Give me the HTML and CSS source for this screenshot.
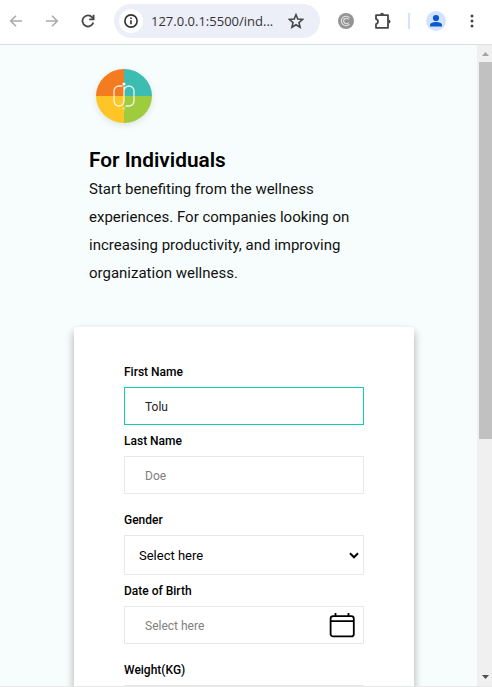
FILE: index.html
```html
<!DOCTYPE html>
<html lang="en">
<head>
<meta charset="utf-8">
<title>For Individuals</title>
<link rel="stylesheet" href="styles.css">
</head>
<body>
<div class="window">
  <header class="toolbar">
    <svg class="nav back" width="14" height="14" viewBox="0 0 14 14"><path d="M13 7H2M7 1.7 1.7 7 7 12.3"/></svg>
    <svg class="nav forward" width="14" height="14" viewBox="0 0 14 14"><path d="M1 7h11M7 1.7 12.3 7 7 12.3"/></svg>
    <svg class="nav reload" width="14" height="14" viewBox="0 0 14 14"><path d="M12.3 8.4A5.5 5.5 0 1 1 11.2 3.4L12.6 5"/><path d="M12.6.8V5.3H8.2"/></svg>
    <div class="address">
      <span class="info"><svg width="14" height="14" viewBox="0 0 14 14"><circle cx="7" cy="7" r="6.1"/><path d="M7 6.2v4M7 3.5v1.6"/></svg></span>
      <span class="url">127.0.0.1:5500/ind...</span>
      <svg class="star" width="16" height="16" viewBox="0 0 16 16"><path d="m8 1.7 1.8 4.4 4.8.4-3.6 3.1 1.1 4.7L8 11.8l-4.1 2.5L5 9.600 1.400 6.500l4.800-.4z"/></svg>
    </div>
    <svg class="copy" width="16" height="16" viewBox="0 0 16 16"><circle class="copy-disc" cx="8" cy="8" r="8"/><path d="M11.500 4.800A4.700 4.700 0 1 0 11.500 11.200M10.600 6.500A2.700 2.700 0 1 0 10.600 9.500"/></svg>
    <svg class="puzzle" width="18" height="18" viewBox="0 0 18 18"><path d="M2 3.200H14V15.800H2V12.100C4.600 11.700 4.600 7.500 2 7.100Z"/><path class="knob" d="M6 2.700a2 2 0 0 1 4 0zM14.500 7.500a2 2 0 0 1 0 4z"/></svg>
    <span class="divider"></span>
    <svg class="avatar" width="20" height="20" viewBox="0 0 20 20"><circle class="avatar-bg" cx="10" cy="10" r="10"/><circle cx="10" cy="7" r="3.100"/><path d="M4 15.500v-1.500c0-2.200 4-3 6-3s6 .8 6 3v1.500z"/></svg>
    <svg class="menu" width="4" height="14" viewBox="0 0 4 14"><circle cx="2" cy="2" r="1.500"/><circle cx="2" cy="7" r="1.500"/><circle cx="2" cy="12" r="1.500"/></svg>
  </header>
  <div class="viewport">
    <main class="page">
      <svg class="logo" width="70" height="70" viewBox="0 0 70 70">
        <path fill="#f47b20" d="M35 36H7A28 27 0 0 1 35 9z"/>
        <path fill="#3dbdb1" d="M35 36V9A28 27 0 0 1 63 36z"/>
        <path fill="#ffc526" d="M35 36v27A28 27 0 0 1 7 36z"/>
        <path fill="#9fcc3f" d="M35 36h28A28 27 0 0 1 35 63z"/>
        <g fill="none" stroke="#fff" stroke-width="1.300" stroke-opacity=".85"><path d="M33.500 26H30a5 5 0 0 0-5 5v10a5 5 0 0 0 10 0V26.500M36.500 46H40a5 5 0 0 0 5-5V31a5 5 0 0 0-10 0v10"/><circle cx="35" cy="48.500" r="1.100" stroke-width=".7" stroke-opacity=".6"/></g>
        <circle cx="35" cy="24" r="1.500" fill="#fff"/>
      </svg>
      <h1>For Individuals</h1>
      <p>Start benefiting from the wellness<br>experiences. For companies looking on<br>increasing productivity, and improving<br>organization wellness.</p>
      <form class="card">
        <label>First Name</label>
        <div class="field active">Tolu</div>
        <label>Last Name</label>
        <div class="field hint spaced">Doe</div>
        <label>Gender</label>
        <div class="field select">Select here<svg width="10" height="7" viewBox="0 0 10 7"><path d="m1 1.300 4 4 4-4"/></svg></div>
        <label>Date of Birth</label>
        <div class="field hint date spaced">Select here<svg width="26" height="26" viewBox="0 0 26 26"><rect x="1.600" y="4.200" width="23.200" height="20.200" rx="2.500"/><path d="M1.600 9.200h23.200M6.500 1v3M19.500 1v3"/></svg></div>
        <label>Weight(KG)</label>
        <div class="field"></div>
      </form>
    </main>
    <div class="scrollbar">
      <svg class="arrow" width="15" height="17" viewBox="0 0 15 17"><path fill="#a3a3a3" d="M5 11 8.500 7 12 11z"/></svg>
      <div class="thumb"></div>
      <svg class="arrow" width="15" height="17" viewBox="0 0 15 17"><path fill="#505050" d="M5 6h7L8.500 10z"/></svg>
    </div>
  </div>
</div>
</body>
</html>
```
FILE: styles.css
```css
* { box-sizing: border-box; }
body { margin: 0; font-family: Roboto, sans-serif; color: #000; }
svg { display: block; flex: none; }
.window { height: 687px; overflow: hidden; display: flex; flex-direction: column; background: #fff; border-bottom: 1px solid #e7e9e9; }
.toolbar { height: 45px; flex: none; display: flex; align-items: center; padding: 0 0 3px 9px; border-bottom: 1px solid #dcdfdf; }
.nav { fill: none; stroke: #aaa; stroke-width: 1.6; }
.forward { margin-left: 22px; }
.reload { margin-left: 22px; stroke: #474747; stroke-width: 1.8; }
.address { width: 206px; height: 34px; margin-left: 19px; flex: none; border-radius: 17px; background: #eceef8; display: flex; align-items: center; padding: 0 16px 0 5px; }
.info { width: 24px; height: 24px; border-radius: 50%; background: #fff; display: grid; place-items: center; }
.info svg { fill: none; stroke: #303030; stroke-width: 1.6; }
.url { margin-left: 8px; font: 13px "Open Sans", sans-serif; color: #333; white-space: nowrap; width: 128px; }
.star { fill: none; stroke: #474747; stroke-width: 1.6; margin-left: auto; }
.copy { margin-left: 18px; fill: none; stroke: #e4e4e4; stroke-width: 1.1; }
.copy-disc { fill: #949494; stroke: none; }
.puzzle { margin-left: 20px; fill: none; stroke: #474747; stroke-width: 1.8; stroke-linejoin: round; }
.knob { fill: #474747; stroke: none; }
.divider { width: 2px; height: 16px; margin-left: 16px; background: #d3e3fd; }
.avatar { margin-left: 16px; fill: #0b57d0; }
.avatar-bg { fill: #d3e3fd; }
.menu { margin-left: 24px; fill: #474747; }
.viewport { flex: 1; min-height: 0; display: flex; }
.page { flex: 1; padding: 15px 63px 0 74px; background: #f7fdfc; overflow: hidden; }
.logo { margin-left: 15px; filter: drop-shadow(0 2px 3px rgba(0, 0, 0, .1)); }
h1 { margin: 18px 0 0 15px; font-size: 20.8px; line-height: 24px; font-weight: 600; }
p { margin: 3px 0 0 15px; font-size: 15px; line-height: 28px; white-space: nowrap; color: #111; }
.card { height: 420px; margin-top: 40px; padding: 36px 50px; background: #fff; border-radius: 2px; box-shadow: 0 4px 8px rgba(0, 0, 0, .2), 0 6px 10px rgba(0, 0, 0, .13); }
label { display: block; height: 31px; padding-top: 1px; font-size: 12px; line-height: 16px; font-weight: 500; }
label:first-child { height: 24px; padding-top: 1px; }
.field { height: 38px; border: 1px solid #e8e8e8; padding: 2px 20px 0; display: flex; align-items: center; font-size: 12px; }
.field + label { padding-top: 8px; }
.spaced { margin-bottom: 10px; }
.active { border-color: #10cfb1; color: #222; }
.hint { color: #808080; }
.select { height: 40px; padding: 0 4px 0 14px; justify-content: space-between; font-size: 13px; }
.select svg { fill: none; stroke: #000; stroke-width: 2; }
.date { padding-right: 8px; justify-content: space-between; }
.date svg { fill: none; stroke: #000; stroke-width: 1.8; margin-top: -2px; }
.scrollbar { width: 15px; flex: none; background: #f0f0f0; display: flex; flex-direction: column; }
.thumb { height: 377px; margin: 0 0 auto 2px; background: #c1c1c1; }
```
